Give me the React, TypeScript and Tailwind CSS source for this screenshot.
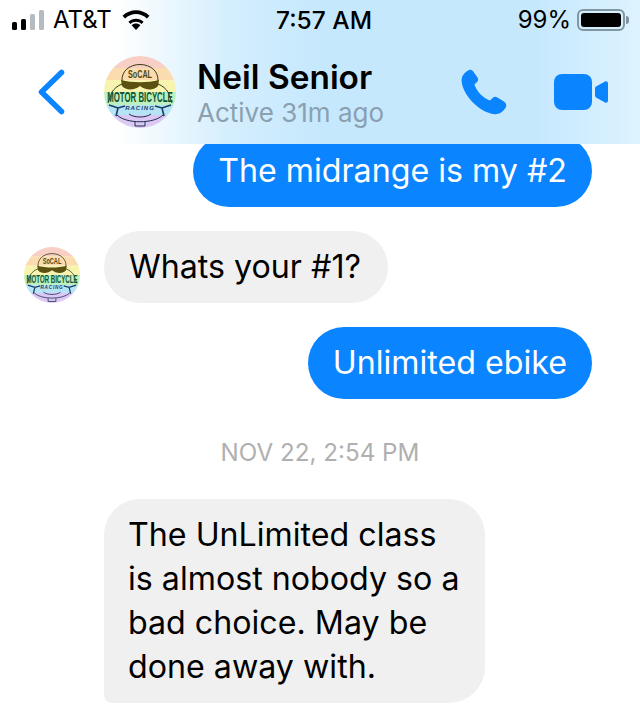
import React from 'react';

const Logo = ({ size }: { size: number }) => (
  <svg width={size} height={size} viewBox="0 0 72 72" className="shrink-0">
    <defs>
      <clipPath id={`logo-clip-${size}`}>
        <circle cx="36" cy="36" r="36" />
      </clipPath>
    </defs>
    <g clipPath={`url(#logo-clip-${size})`}>
      <rect width="72" height="12" fill="#f8cfc4" />
      <rect y="12" width="72" height="12" fill="#fbdcae" />
      <rect y="24" width="72" height="12" fill="#f8f3ae" />
      <rect y="36" width="72" height="13" fill="#bdf0c0" />
      <rect y="49" width="72" height="10" fill="#b4e4f6" />
      <rect y="59" width="72" height="13" fill="#dcc8f4" />
    </g>
    {/* helmet */}
    <path d="M18 25 C17 3 55 3 54 25" fill="none" stroke="#3a3a18" strokeWidth="1" />
    <text transform="translate(36 22) scale(0.72 1.15)" textAnchor="middle" fontSize="10" fontWeight="700" fill="#4a4a14" fontFamily="'Liberation Sans', sans-serif">SoCAL</text>
    {/* goggles */}
    <path d="M17 24 C28 27 44 27 55 24 L54 30 C50 35 41 34 36 30 C31 34 22 35 18 30 Z" fill="#5c5012" />
    {/* body */}
    <path d="M18 28 C13 30 10 33 8 36 L4 47 M54 28 C59 30 62 33 64 36 L68 47" fill="none" stroke="#2d3a1a" strokeWidth="1" />
    <text transform="translate(36 46) scale(0.56 1.08)" textAnchor="middle" fontSize="14" fontWeight="700" fill="#14532d" fontFamily="'Liberation Sans', sans-serif">MOTOR BICYCLE</text>
    <text x="36" y="54" textAnchor="middle" fontSize="6" fontWeight="700" fontStyle="italic" fill="#1e3a5f" fontFamily="'Liberation Sans', sans-serif" letterSpacing="1">RACING</text>
    {/* wrenches and lower frame */}
    <path d="M5 49 L14 52 L21 50 M14 52 L12 60 M67 49 L58 52 L51 50 M58 52 L60 60" fill="none" stroke="#1c3d66" strokeWidth="1.6" />
    <path d="M13 59 C22 68 50 68 59 59 M25 58 C30 62 42 62 47 58" fill="none" stroke="#1f3050" strokeWidth="1" />
    <path d="M31 66 L31 70 L41 70 L41 66" fill="none" stroke="#1f3050" strokeWidth="1" />
  </svg>
);

const SignalBars = () => (
  <svg width="32" height="20" viewBox="0 0 32 20" className="shrink-0">
    <rect x="0" y="12" width="5" height="8" rx="1.5" fill="#000" />
    <rect x="9" y="9" width="5" height="11" rx="1.5" fill="#000" />
    <rect x="18" y="4" width="5" height="16" rx="1.5" fill="#b4bcc2" />
    <rect x="27" y="0" width="5" height="20" rx="1.5" fill="#b4bcc2" />
  </svg>
);

const Wifi = () => (
  <svg width="28" height="20" viewBox="0 0 28 20" className="shrink-0">
    <path d="M14 20 L9.6 15.2 C12 13 16 13 18.4 15.2 Z" fill="#000" />
    <path d="M6.4 11.8 C10.6 7.8 17.4 7.8 21.6 11.8 L19.6 14 C16.4 11 11.6 11 8.4 14 Z" fill="#000" />
    <path d="M0.5 5.8 C8 -1.6 20 -1.6 27.5 5.8 L24.9 8.6 C18.8 2.6 9.2 2.6 3.1 8.6 Z" fill="#000" />
  </svg>
);

const Battery = () => (
  <div className="flex items-center">
    <div className="w-[48px] h-[22px] rounded-[6px] border-2 border-[#8296a3] p-[2px]">
      <div className="w-full h-full rounded-[3px] bg-black" />
    </div>
    <div className="w-[3px] h-[8px] ml-[1px] rounded-r-full bg-[#7f929f]" />
  </div>
);

const Back = () => (
  <svg width="28" height="46" viewBox="0 0 28 46" className="shrink-0">
    <path d="M24.5 3.5 L4.5 23 L24.5 42.5" fill="none" stroke="#0a84ff" strokeWidth="5.5" strokeLinecap="round" strokeLinejoin="round" />
  </svg>
);

const Phone = () => (
  <svg width="46" height="46" viewBox="0 0 46 46" className="shrink-0">
    <path
      d="M7 1.5 C9 0.2 11 1 12.2 2.4 L16.5 8.5 C17.6 10.2 17.2 12 15.8 13.2 L13.4 15.6 C14.5 19 16.6 22.4 19.6 25.6 C22.8 28.6 26 30.4 29 31.4 L31.8 28.8 C33 27.6 34.8 27.4 36.4 28.4 L43 32.6 C45.4 34.4 46 36.8 44.4 39 C42 43 38 45.6 33.4 45.2 C25.8 44.4 17.6 39.4 11.4 33 C5.2 26.4 1 18.6 0.6 12 C0.4 7.6 3 3.8 7 1.5 Z"
      fill="#0a84ff"
    />
  </svg>
);

const Video = () => (
  <svg width="54" height="36" viewBox="0 0 54 36" className="shrink-0">
    <rect x="0" y="0" width="38" height="36" rx="8" fill="#0a84ff" />
    <path d="M42 12.5 L51 7.4 C52.4 6.8 54 7.6 54 9.2 L54 26.8 C54 28.4 52.4 29.2 51 28.6 L42 23.5 C41.4 23.1 41 22.4 41 21.6 L41 14.4 C41 13.6 41.4 12.9 42 12.5 Z" fill="#0a84ff" />
  </svg>
);

const App = () => {
  return (
    <div className="w-[640px] h-[704px] overflow-hidden bg-white" style={{ fontFamily: "Inter, 'Liberation Sans', sans-serif" }}>
      {/* Header */}
      <div className="relative z-10 h-[144px] bg-[linear-gradient(90deg,#ffffff_0%,#ffffff_18%,#d4eefd_36%,#c6e8fd_50%,#c6e8fd_84%,#def3fe_100%)]">
        {/* Status bar */}
        <div className="h-[40px] pl-[12px] pr-[11px] flex items-center text-[24px] leading-none text-black">
          <div className="flex items-center w-[220px]">
            <SignalBars />
            <span className="ml-[9px]">AT&amp;T</span>
            <span className="ml-[10px]"><Wifi /></span>
          </div>
          <span className="ml-[44px] text-[24.5px] font-medium">7:57 AM</span>
          <div className="flex items-center justify-end flex-1">
            <span>99%</span>
            <span className="ml-[6px]"><Battery /></span>
          </div>
        </div>
        {/* Nav */}
        <div className="flex items-center h-[104px] pl-[37px]">
          <Back />
          <div className="ml-[39px]"><Logo size={72} /></div>
          <div className="ml-[21px] pt-[2px] flex-1">
            <div className="text-[33.4px] leading-[40px] font-semibold text-black">Neil Senior</div>
            <div className="text-[26px] leading-[32px] text-[#8aa0b0]">Active 31m ago</div>
          </div>
          <div className="flex items-center gap-[47px] pr-[32px]">
            <Phone />
            <Video />
          </div>
        </div>
      </div>

      {/* Messages */}
      <div className="-mt-[9px] px-[24px] flex flex-col text-[32.2px] leading-[44px] text-black">
        <div className="self-end mr-[24px] bg-[#0a84ff] text-white rounded-[36px] h-[72px] px-[25px] flex items-center whitespace-nowrap">
          The midrange is my #2
        </div>
        <div className="mt-[24px] flex items-end">
          <Logo size={56} />
          <div className="ml-[24px] bg-[#f0f0f0] rounded-[36px] h-[72px] pl-[25px] pr-[27px] flex items-center whitespace-nowrap">
            Whats your #1?
          </div>
        </div>
        <div className="mt-[24px] self-end mr-[24px] bg-[#0a84ff] text-white rounded-[36px] h-[72px] px-[25px] flex items-center whitespace-nowrap">
          Unlimited ebike
        </div>
        <div className="mt-[40px] text-center text-[24.2px] leading-[28px] text-[#b0b0b0]">NOV 22, 2:54 PM</div>
        <div className="mt-[32px] ml-[80px] w-[381px] bg-[#f0f0f0] rounded-[36px] rounded-bl-[8px] px-[24px] py-[14px] whitespace-nowrap">
          The UnLimited class
          <br />
          is almost nobody so a
          <br />
          bad choice. May be
          <br />
          done away with.
        </div>
      </div>
    </div>
  );
};

export default App;
